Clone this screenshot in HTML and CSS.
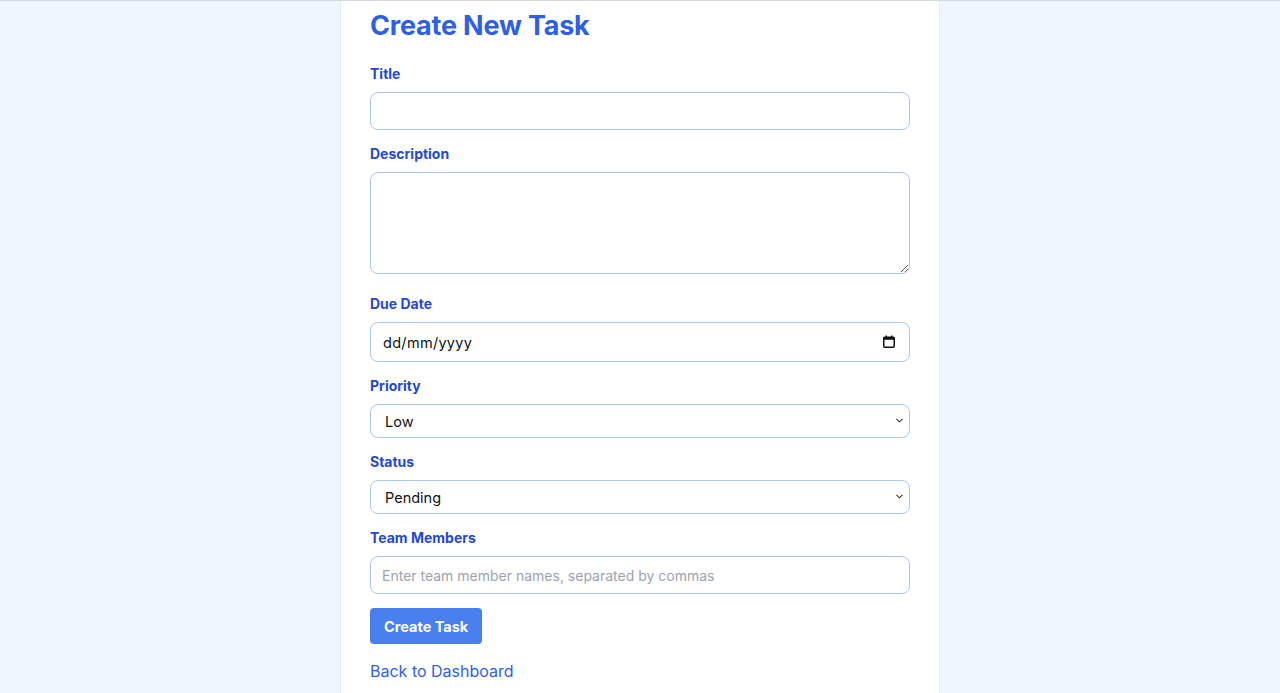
FILE: index.html
```html
<!DOCTYPE html>
<html lang="en">
<head>
<meta charset="utf-8">
<title>Create New Task</title>
<link rel="stylesheet" href="styles.css">
</head>
<body>
<main class="card">
  <h1 class="heading">Create New Task</h1>
  <form class="form">
    <div class="group">
      <label class="label" for="title">Title</label>
      <input class="field field-text" id="title" type="text">
    </div>
    <div class="group">
      <label class="label" for="desc">Description</label>
      <textarea class="field field-area" id="desc"></textarea>
    </div>
    <div class="group">
      <label class="label" for="due">Due Date</label>
      <div class="control">
        <input class="field field-date" id="due" type="text" placeholder="dd/mm/yyyy">
        <svg class="cal-icon" width="12" height="13" viewBox="0 0 12 13" aria-hidden="true">
          <rect x="0.75" y="2.25" width="10.5" height="10" rx="1" fill="none" stroke="#111" stroke-width="1.5"/>
          <rect x="0.75" y="2.25" width="10.5" height="2.5" fill="#111"/>
          <rect x="2.5" y="0.5" width="1.5" height="2" fill="#111"/>
          <rect x="8" y="0.5" width="1.5" height="2" fill="#111"/>
        </svg>
      </div>
    </div>
    <div class="group">
      <label class="label" for="priority">Priority</label>
      <div class="control">
        <select class="field field-select" id="priority">
          <option>Low</option>
          <option>Medium</option>
          <option>High</option>
        </select>
        <svg class="chev" width="7" height="5" viewBox="0 0 7 5" aria-hidden="true">
          <path d="M0.5 0.8 L3.5 3.8 L6.5 0.8" fill="none" stroke="#333" stroke-width="1.1"/>
        </svg>
      </div>
    </div>
    <div class="group">
      <label class="label" for="status">Status</label>
      <div class="control">
        <select class="field field-select" id="status">
          <option>Pending</option>
          <option>In Progress</option>
          <option>Completed</option>
        </select>
        <svg class="chev" width="7" height="5" viewBox="0 0 7 5" aria-hidden="true">
          <path d="M0.5 0.8 L3.5 3.8 L6.5 0.8" fill="none" stroke="#333" stroke-width="1.1"/>
        </svg>
      </div>
    </div>
    <div class="group">
      <label class="label" for="team">Team Members</label>
      <input class="field field-team" id="team" type="text" placeholder="Enter team member names, separated by commas">
    </div>
    <button class="submit" type="button">Create Task</button>
  </form>
  <a class="back" href="#">Back to Dashboard</a>
</main>
</body>
</html>
```
FILE: styles.css
```css
html, body {
  margin: 0;
  padding: 0;
}
body {
  background: #eff6ff;
  border-top: 1px solid #d6d9de;
  font-family: Inter, "Liberation Sans", sans-serif;
  min-height: 692px;
  box-sizing: border-box;
}
.card {
  box-sizing: border-box;
  width: 600px;
  margin: 0 auto;
  min-height: 692px;
  background: #ffffff;
  padding: 0 29px 20px;
  border-left: 1px solid #e3ebf7;
  border-right: 1px solid #e3ebf7;
  display: flex;
  flex-direction: column;
}
.heading {
  margin: 7px 0 0;
  height: 36px;
  line-height: 36px;
  font-size: 27px;
  font-weight: 700;
  color: #2f5fe3;
  letter-spacing: -0.2px;
}
.form {
  margin-top: 20px;
  display: flex;
  flex-direction: column;
}
.group {
  display: flex;
  flex-direction: column;
  margin-bottom: 14px;
}
.label {
  display: block;
  font-size: 14px;
  line-height: 20px;
  font-weight: 700;
  color: #2449d0;
  margin-bottom: 8px;
}
.control {
  position: relative;
  width: 540px;
}
.field {
  box-sizing: border-box;
  width: 540px;
  border: 1px solid #a9c8f0;
  border-radius: 8px;
  background: #ffffff;
  font-family: Inter, "Liberation Sans", sans-serif;
  font-size: 14.5px;
  color: #111111;
  padding: 0 12px;
  margin: 0;
  outline: none;
  display: block;
}
.field-text {
  height: 38px;
}
.field-area {
  height: 102px;
  padding: 10px 12px;
  resize: vertical;
  margin-bottom: 6px;
}
.field-date {
  height: 40px;
  padding-left: 12px;
  letter-spacing: 0.3px;
}
.field-date::placeholder {
  color: #111111;
  opacity: 1;
}
.cal-icon {
  position: absolute;
  right: 15px;
  top: 13px;
}
.field-select {
  height: 34px;
  padding: 0 30px 0 14px;
  -webkit-appearance: none;
  appearance: none;
}
.chev {
  position: absolute;
  right: 7px;
  top: 14px;
  pointer-events: none;
}
.field-team {
  height: 38px;
  padding-left: 11px;
  font-size: 14px;
}
.field-team::placeholder {
  color: #9ca3af;
  opacity: 1;
}
.submit {
  align-self: flex-start;
  height: 36px;
  padding: 0 14px;
  border: none;
  border-radius: 4px;
  background: #4a80ee;
  color: #ffffff;
  font-family: Inter, "Liberation Sans", sans-serif;
  font-size: 14.5px;
  font-weight: 700;
  cursor: pointer;
}
.back {
  margin-top: 16px;
  font-size: 16px;
  line-height: 22px;
  color: #2f5fe3;
  text-decoration: none;
  align-self: flex-start;
}
```
